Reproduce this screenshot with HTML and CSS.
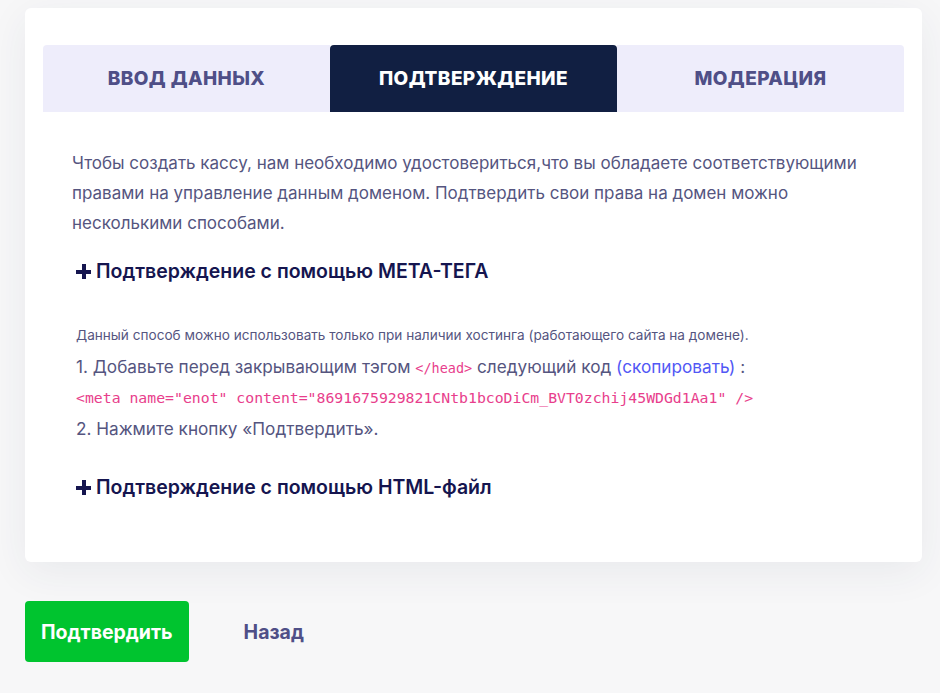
FILE: index.html
```html
<!DOCTYPE html>
<html lang="ru">
<head>
<meta charset="UTF-8" />
<title>Подтверждение домена</title>
<link rel="stylesheet" href="styles.css">
</head>
<body>
<div class="page">
  <div class="card">
    <div class="tabs">
      <div class="tab">Ввод данных</div>
      <div class="tab active">Подтверждение</div>
      <div class="tab">Модерация</div>
    </div>

    <div class="content">
      <p class="intro">Чтобы создать кассу, нам необходимо удостовериться,что вы обладаете соответствующими правами на управление данным доменом. Подтвердить свои права на домен можно несколькими способами.</p>

      <div class="method open">
        <div class="method-title"><span class="plus" aria-hidden="true"></span>Подтверждение с помощью МЕТА-ТЕГА</div>
        <div class="method-body">
          <p class="note">Данный способ можно использовать только при наличии хостинга (работающего сайта на домене).</p>
          <p class="step">1. Добавьте перед закрывающим тэгом <code>&lt;/head&gt;</code> следующий код <a href="#" class="copy">(скопировать)</a> :</p>
          <p class="code-line"><code>&lt;meta name="enot" content="8691675929821CNtb1bcoDiCm_BVT0zchij45WDGd1Aa1" /&gt;</code></p>
          <p class="step">2. Нажмите кнопку «Подтвердить».</p>
        </div>
      </div>

      <div class="method">
        <div class="method-title"><span class="plus" aria-hidden="true"></span>Подтверждение с помощью HTML-файл</div>
      </div>
    </div>
  </div>

  <div class="actions">
    <button class="btn-confirm">Подтвердить</button>
    <button class="btn-back">Назад</button>
  </div>
</div>
</body>
</html>
```

FILE: styles.css
```css
/* Base */
* {
  box-sizing: border-box;
}
html, body {
  margin: 0;
  padding: 0;
  height: 100%;
}
body {
  font-family: Inter, 'Noto Sans', sans-serif;
  background: #f7f7f8;
  color: #55557f;
  overflow: hidden;
}
.page {
  padding: 8px 18px 0 25px;
}

/* Card */
.card {
  background: #fff;
  border-radius: 6px;
  padding: 37px 18px 60px 18px;
  box-shadow: 0 10px 40px rgba(40, 50, 90, 0.07);
}
.tabs {
  display: grid;
  grid-template-columns: 1fr 1fr 1fr;
}
.tab {
  height: 67px;
  display: flex;
  align-items: center;
  justify-content: center;
  background: #eeedfb;
  color: #4f4f87;
  font-size: 19px;
  font-weight: 800;
  text-transform: uppercase;
  letter-spacing: 0.4px;
}
.tab:first-child {
  border-top-left-radius: 4px;
}
.tab:last-child {
  border-top-right-radius: 4px;
}
.tab.active {
  background: #111f42;
  color: #fff;
  border-radius: 4px 4px 0 0;
}

/* Content */
.content {
  padding: 36px 29px 0 29px;
}
.intro {
  margin: 0;
  font-size: 17px;
  line-height: 30px;
  color: #55557f;
}
.method {
  margin-top: 18px;
}
.method-title {
  display: flex;
  align-items: center;
  padding-left: 4px;
  font-size: 19.5px;
  font-weight: 600;
  color: #15154f;
  line-height: 30px;
}
.plus {
  position: relative;
  width: 15px;
  height: 15px;
  margin-right: 5px;
  flex-shrink: 0;
}
.plus::before, .plus::after {
  content: '';
  position: absolute;
  background: #15154f;
}
.plus::before {
  left: 0; right: 0;
  top: 6px;
  height: 4px;
}
.plus::after {
  top: 0; bottom: 0;
  left: 6px;
  width: 4px;
}
.method-body {
  padding: 39px 0 0 4px;
}
.method.open + .method {
  margin-top: 28px;
}
.note {
  margin: 0 0 6px 0;
  font-size: 13.6px;
  line-height: 20px;
  color: #55557f;
}
.step {
  margin: 0;
  font-size: 17.2px;
  line-height: 31px;
  color: #55557f;
}
code {
  font-family: 'DejaVu Sans Mono', 'Liberation Mono', monospace;
  font-size: 13.5px;
  line-height: 1;
  color: #e83e8c;
}
.code-line {
  margin: 0;
  font-family: 'DejaVu Sans Mono', 'Liberation Mono', monospace;
  font-size: 14.8px;
  line-height: 31px;
}
.code-line code {
  font-size: 14.8px;
}
.copy {
  color: #5258f5;
  text-decoration: none;
}

/* Actions */
.actions {
  display: flex;
  align-items: center;
  gap: 55px;
  margin-top: 39px;
}
.btn-confirm {
  height: 61px;
  padding: 0 16px;
  border: none;
  border-radius: 4px;
  background: #00c42f;
  color: #fff;
  font-family: inherit;
  font-size: 19.5px;
  font-weight: 700;
  cursor: pointer;
}
.btn-back {
  border: none;
  background: none;
  padding: 0;
  color: #4f4f87;
  font-family: inherit;
  font-size: 19.5px;
  font-weight: 700;
  cursor: pointer;
}
```
